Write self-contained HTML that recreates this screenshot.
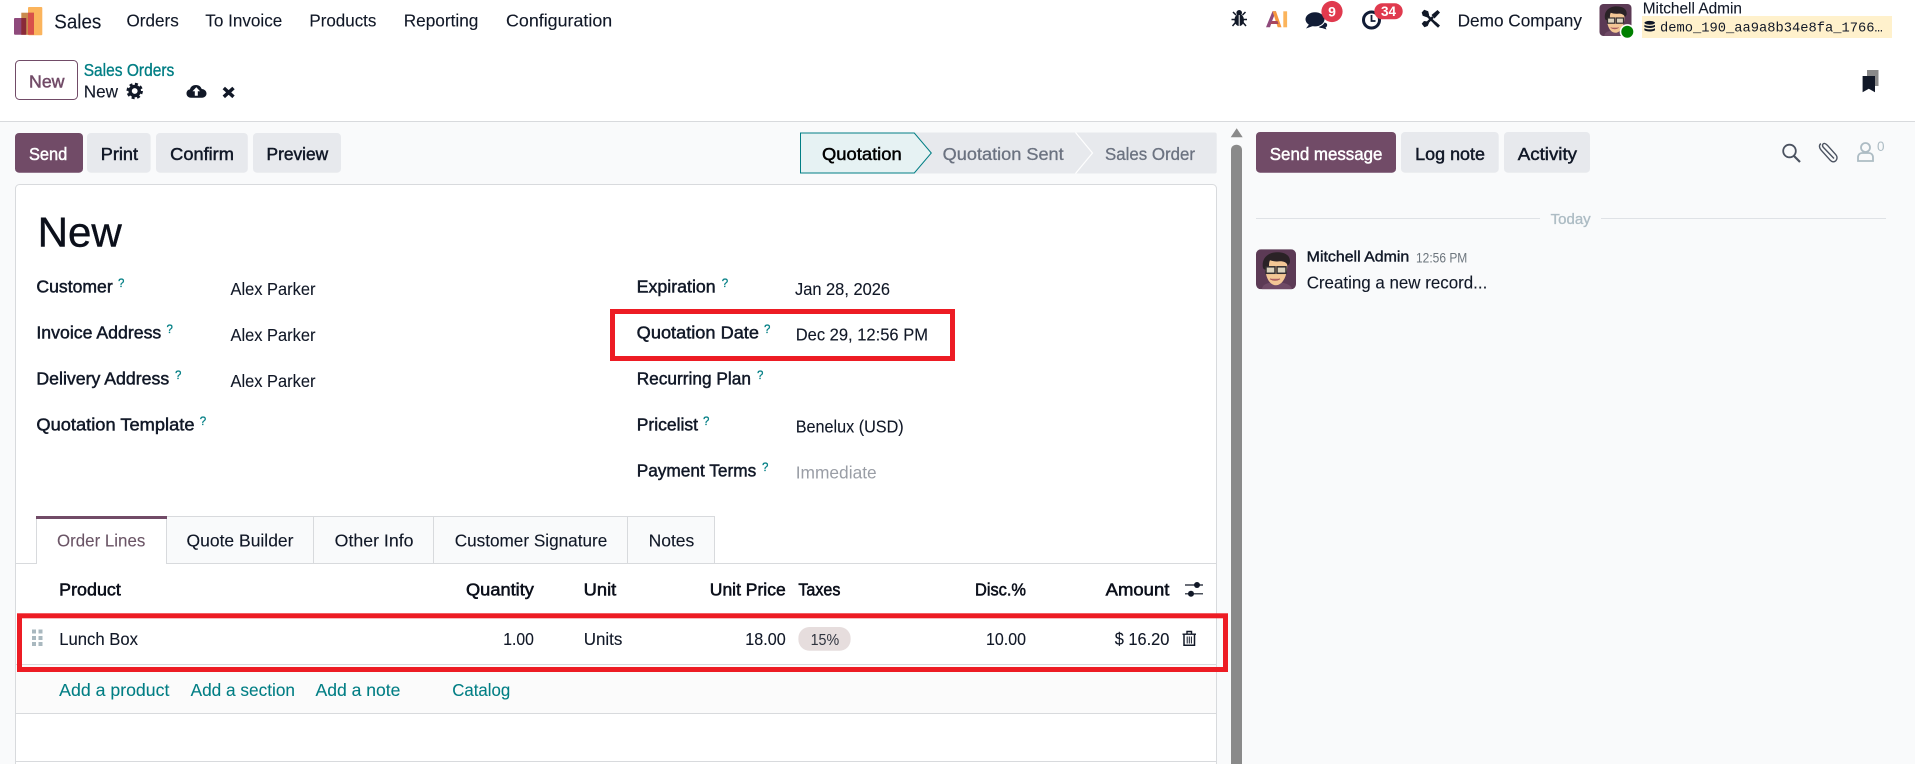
<!DOCTYPE html>
<html lang="en">
<head>
<meta charset="utf-8">
<title>Sales Orders - New</title>
<style>
html,body{margin:0;padding:0;width:1915px;height:764px;overflow:hidden;background:#fff}
svg{display:block;position:absolute;left:0;top:0}
text{font-family:"Liberation Sans",Arial,sans-serif;font-size:17.6px;fill:#111827;white-space:pre}
text:not([style]):not([class]){stroke:#111827;stroke-width:.12px}
.m{stroke:currentColor;stroke-width:.48px}
.b{color:#111827}
.q{font-size:11.5px;fill:#017e84;color:#017e84;stroke:#017e84;stroke-width:.25px}
.l{fill:#017e84;stroke:#017e84;stroke-width:.1px}
.g{fill:#6b7280;color:#6b7280}
</style>
</head>
<body>
<svg width="1915" height="764" viewBox="0 0 1915 764" xmlns="http://www.w3.org/2000/svg">
<defs>
<symbol id="ava" viewBox="0 0 40 40">
<rect width="40" height="40" rx="5" fill="#5c3a55"/>
<path d="M6 40c0-5 6-7 14-7s15 2 16 7z" fill="#6f4a66"/>
<path d="M9 16c0-8 7-10 13-9 7 1 10 5 9 13-1 10-6 16-11 16-7 0-11-9-11-20z" fill="#f3c795"/>
<path d="M7 19C5 9 12 3 21 3c8 0 13 3 13 9 0 2-1 3-2 4-2-3-4-4-8-4-4 .5-7 0-10-1-1 2-1 4-1 6l-2 4c-2-.5-3-1-4-2z" fill="#2a2226"/>
<rect x="10" y="17.500" width="9" height="6.500" fill="#dcd3bd" stroke="#332e30" stroke-width="1.500"/>
<rect x="21" y="17.500" width="9" height="6.500" fill="#dcd3bd" stroke="#332e30" stroke-width="1.500"/>
<path d="M14 29.500c3 2 7 2 10 0" fill="#b56b6f" stroke="#a85a5a" stroke-width="1"/>
</symbol>
</defs>

<!-- page backgrounds -->
<rect x="0" y="0" width="1915" height="764" fill="#f9fafb"/>
<rect x="0" y="0" width="1915" height="121" fill="#fff"/>
<rect x="0" y="121" width="1915" height="1" fill="#d8dadd"/>

<!-- logo -->
<rect x="28" y="7" width="14.300" height="28.300" rx="1" fill="#fbb45c"/>
<rect x="21.300" y="12.700" width="12.700" height="22" fill="#c98a4e"/>
<rect x="28" y="12.700" width="6" height="22" fill="#d8504a"/>
<rect x="14" y="18" width="12.300" height="16.700" rx="1" fill="#8f4a7c"/>
<rect x="21.300" y="18" width="5" height="16.700" fill="#8a2a38"/>
<rect x="26.300" y="18" width="1.700" height="16.700" fill="#c98a4e"/>

<!-- top nav -->
<text x="54.300" y="28.300" style="font-size:20.500px;stroke:#111827;stroke-width:.12px" textLength="47" lengthAdjust="spacingAndGlyphs">Sales</text>
<text x="126.500" y="26.700" textLength="52.300" lengthAdjust="spacingAndGlyphs">Orders</text>
<text x="205.300" y="26.700" textLength="77" lengthAdjust="spacingAndGlyphs">To Invoice</text>
<text x="309.400" y="26.700" textLength="67" lengthAdjust="spacingAndGlyphs">Products</text>
<text x="403.700" y="26.700" textLength="74.700" lengthAdjust="spacingAndGlyphs">Reporting</text>
<text x="506" y="26.700" textLength="106.200" lengthAdjust="spacingAndGlyphs">Configuration</text>

<!-- systray: bug -->
<g fill="#111827" stroke="#111827">
<ellipse cx="1239.200" cy="20" rx="4.800" ry="6" stroke="none"/>
<circle cx="1239.200" cy="12.800" r="2.800" stroke="none"/>
<path d="M1233 12l3 3M1245.500 12l-3 3M1231.500 19.500h4M1247 19.500h-4M1232.500 26l3-3.500M1246 26l-3-3.500" stroke-width="1.500" fill="none"/>
</g>
<rect x="1238.700" y="15" width="1" height="11" fill="#fff"/>
<!-- AI -->
<path d="M1266 27.300l6.500-16h3.500l-4 10-2 6z" fill="#8f4a7c"/>
<path d="M1272.500 11.300h3.500l5.500 16h-3.800z" fill="#f5973f"/>
<path d="M1269.500 24l2.500-3h5.500l1 3z" fill="#a9475e"/>
<rect x="1283.300" y="11.300" width="3.800" height="16" fill="#fbb45c"/>
<!-- chat -->
<path d="M1320 22c2-.5 6 .5 7 2 .5 2-.5 3-1.500 3.500l1 2-4.500-1.500c-2 0-4-1-4-2.500z" fill="#111c36"/>
<ellipse cx="1315" cy="19.300" rx="10" ry="7.600" fill="#111c36" stroke="#fff" stroke-width="1"/>
<path d="M1309 24.500l-3 4 7-2.500z" fill="#111c36"/>
<!-- chat badge -->
<circle cx="1332" cy="11.500" r="10.600" fill="#e03a4e"/>
<text x="1332" y="16.300" text-anchor="middle" style="font-size:14px;fill:#fff;font-weight:700">9</text>
<!-- clock -->
<circle cx="1371.500" cy="20" r="8" fill="none" stroke="#111c36" stroke-width="3"/>
<path d="M1371.500 15v6h4" fill="none" stroke="#111c36" stroke-width="1.800"/>
<!-- clock badge -->
<rect x="1374.300" y="3.300" width="28.400" height="16" rx="8" fill="#e03a4e"/>
<text x="1388.500" y="16" text-anchor="middle" style="font-size:13.500px;fill:#fff;font-weight:700">34</text>
<!-- tools -->
<path d="M1424.500 13l13 12.500" stroke="#111827" stroke-width="2.600" fill="none"/>
<path d="M1421.700 12.500l2.500-2.700 4 1.500 1 4-2.500 2-4-1.500z" fill="#111827"/>
<path d="M1433.500 23.500l2-2 4.500 4-2 2.300z" fill="#111827"/>
<path d="M1425 25l8-8" stroke="#111827" stroke-width="2.400" fill="none"/>
<path d="M1431.500 15l6-5 2.500 2.500-5.500 6z" fill="#111827"/>
<path d="M1428 21.500l-4 -0.500-2.300 2.800 2.700 3.500 3.300-1.300 1.300-3z" fill="#111827"/>
<text x="1457.600" y="26.700" textLength="124.400" lengthAdjust="spacingAndGlyphs">Demo Company</text>

<!-- user -->
<use href="#ava" x="1599.300" y="4" width="32.400" height="32"/>
<circle cx="1627.300" cy="31.700" r="7.600" fill="#fff"/>
<circle cx="1627.300" cy="31.700" r="6" fill="#008000"/>
<text x="1642.700" y="13.500" style="font-size:15.500px;stroke:#111827;stroke-width:.1px" textLength="99.300" lengthAdjust="spacingAndGlyphs">Mitchell Admin</text>
<rect x="1642" y="16" width="250" height="22" fill="#fff1cc"/>
<g fill="#111827">
<ellipse cx="1649.700" cy="22.800" rx="5.300" ry="1.900"/>
<path d="M1644.400 24.700c2 1.600 8.600 1.600 10.600 0v2.100c-2 1.600-8.600 1.600-10.600 0z"/>
<path d="M1644.400 28.200c2 1.600 8.600 1.600 10.600 0v2.100c-2 1.600-8.600 1.600-10.600 0z"/>
</g>
<text x="1660" y="31.700" style="font-family:'Liberation Mono',monospace;font-size:13.750px" textLength="222.700" lengthAdjust="spacingAndGlyphs">demo_190_aa9a8b34e8fa_1766…</text>

<!-- control panel -->
<rect x="15.500" y="60.500" width="62" height="39" rx="4" fill="#fff" stroke="#714b67"/>
<text class="m" x="29" y="87.300" style="fill:#714b67;color:#714b67" textLength="35.500" lengthAdjust="spacingAndGlyphs">New</text>
<text x="83.700" y="76" class="m" style="fill:#017e84;color:#017e84;stroke-width:.35px" textLength="90.600" lengthAdjust="spacingAndGlyphs">Sales Orders</text>
<text x="83.700" y="97.300" textLength="34.300" lengthAdjust="spacingAndGlyphs">New</text>
<!-- gear -->
<circle cx="134.700" cy="91" r="4.600" fill="none" stroke="#111827" stroke-width="3.400"/>
<circle cx="134.700" cy="91" r="7" fill="none" stroke="#111827" stroke-width="2.400" stroke-dasharray="3 2.500"/>
<!-- cloud -->
<path d="M191 97.700c-3 0-4.500-2-4.500-4.300 0-2.200 1.500-3.800 3.500-4 .5-2.800 3-4.400 6-4.400 3 0 5 1.800 5.700 4 2.700.2 4.800 2 4.800 4.500 0 2.500-2 4.200-4.500 4.200z" fill="#111827"/>
<path d="M196.300 87.300l-3.800 4h2.300v4.400h3v-4.400h2.300z" fill="#fff"/>
<!-- x -->
<path d="M223.800 88l9.700 8.800M233.500 88l-9.700 8.800" stroke="#111827" stroke-width="3.500" fill="none"/>
<!-- bookmarks -->
<path d="M1867 70h11.500v16h-11.500z" fill="#8a8a8a"/>
<path d="M1862.600 76h12.400v16.300l-6.200-3.500-6.200 3.500z" fill="#111827"/>

<!-- action buttons -->
<rect x="15" y="133" width="68" height="39.700" rx="4" fill="#714b67"/>
<text class="m" x="29" y="160" style="fill:#fff;color:#fff" textLength="38.300" lengthAdjust="spacingAndGlyphs">Send</text>
<rect x="87" y="133" width="63.600" height="39.700" rx="4" fill="#e7e9ed"/>
<text class="m b" x="100.800" y="160" textLength="37.200" lengthAdjust="spacingAndGlyphs">Print</text>
<rect x="156" y="133" width="91.800" height="39.700" rx="4" fill="#e7e9ed"/>
<text class="m b" x="170.200" y="160" textLength="63.700" lengthAdjust="spacingAndGlyphs">Confirm</text>
<rect x="253" y="133" width="88" height="39.700" rx="4" fill="#e7e9ed"/>
<text class="m b" x="266.500" y="160" textLength="61.700" lengthAdjust="spacingAndGlyphs">Preview</text>

<!-- status bar -->
<rect x="800" y="132.500" width="416.700" height="41" rx="2" fill="#e7e9ed"/>
<path d="M1075.500 132.500l17 20.500-17 20.500" fill="none" stroke="#fff" stroke-width="1.200"/>
<path d="M800.500 133h113.800l17 20-17 20H800.500z" fill="#e6f2f3" stroke="#017e84" stroke-width="1"/>
<text class="m" x="822" y="160" style="fill:#000;color:#000" textLength="79.700" lengthAdjust="spacingAndGlyphs">Quotation</text>
<text class="m g" x="942.700" y="160" style="stroke-width:.3px" textLength="121" lengthAdjust="spacingAndGlyphs">Quotation Sent</text>
<text class="m g" x="1105" y="160" style="stroke-width:.3px" textLength="90" lengthAdjust="spacingAndGlyphs">Sales Order</text>

<!-- sheet -->
<rect x="15.500" y="184.500" width="1201" height="600" rx="4" fill="#fff" stroke="#d8dadd"/>

<text x="37.600" y="246.700" style="font-size:42px;fill:#0b0f1a;stroke:#0b0f1a;stroke-width:.4px" textLength="84.200" lengthAdjust="spacingAndGlyphs">New</text>

<!-- left fields -->
<text class="m b" x="36.400" y="292.700" textLength="76.300" lengthAdjust="spacingAndGlyphs">Customer</text>
<text class="q" x="118" y="287">?</text>
<text x="230.500" y="295" textLength="85" lengthAdjust="spacingAndGlyphs">Alex Parker</text>
<text class="m b" x="36.400" y="338.700" textLength="124.900" lengthAdjust="spacingAndGlyphs">Invoice Address</text>
<text class="q" x="166.500" y="333">?</text>
<text x="230.500" y="341" textLength="85" lengthAdjust="spacingAndGlyphs">Alex Parker</text>
<text class="m b" x="36.400" y="384.700" textLength="132.800" lengthAdjust="spacingAndGlyphs">Delivery Address</text>
<text class="q" x="175" y="379">?</text>
<text x="230.500" y="387" textLength="85" lengthAdjust="spacingAndGlyphs">Alex Parker</text>
<text class="m b" x="36.400" y="430.700" textLength="158.100" lengthAdjust="spacingAndGlyphs">Quotation Template</text>
<text class="q" x="199.700" y="425">?</text>

<!-- right fields -->
<text class="m b" x="636.700" y="292.700" textLength="79" lengthAdjust="spacingAndGlyphs">Expiration</text>
<text class="q" x="721.700" y="287">?</text>
<text x="795" y="295" textLength="95" lengthAdjust="spacingAndGlyphs">Jan 28, 2026</text>
<text class="m b" x="636.700" y="338.500" textLength="122.300" lengthAdjust="spacingAndGlyphs">Quotation Date</text>
<text class="q" x="764" y="333">?</text>
<text x="795.700" y="340.700" textLength="132.300" lengthAdjust="spacingAndGlyphs">Dec 29, 12:56 PM</text>
<text class="m b" x="636.700" y="384.700" textLength="114.300" lengthAdjust="spacingAndGlyphs">Recurring Plan</text>
<text class="q" x="757" y="379">?</text>
<text class="m b" x="636.700" y="430.700" textLength="61.300" lengthAdjust="spacingAndGlyphs">Pricelist</text>
<text class="q" x="703" y="425">?</text>
<text x="795.700" y="432.700" textLength="108" lengthAdjust="spacingAndGlyphs">Benelux (USD)</text>
<text class="m b" x="636.700" y="476.700" textLength="119.600" lengthAdjust="spacingAndGlyphs">Payment Terms</text>
<text class="q" x="762" y="471">?</text>
<text x="795.700" y="478.700" style="fill:#9a9ea6" textLength="81" lengthAdjust="spacingAndGlyphs">Immediate</text>

<!-- tabs -->
<rect x="16" y="563" width="1200" height="1" fill="#d8dadd"/>
<rect x="166.500" y="516.500" width="548" height="47" fill="#f9fafb" stroke="#d8dadd"/>
<rect x="313" y="516.500" width="1" height="47" fill="#d8dadd"/>
<rect x="433" y="516.500" width="1" height="47" fill="#d8dadd"/>
<rect x="627" y="516.500" width="1" height="47" fill="#d8dadd"/>
<rect x="36" y="516" width="131" height="48.500" fill="#fff"/>
<rect x="36" y="517" width="1" height="47" fill="#d8dadd"/>
<rect x="166" y="517" width="1" height="47" fill="#d8dadd"/>
<rect x="36" y="516" width="131" height="3" fill="#714b67"/>
<text x="57" y="546.700" style="fill:#6b5566;stroke:#6b5566;stroke-width:.1px" textLength="88.300" lengthAdjust="spacingAndGlyphs">Order Lines</text>
<text x="186.500" y="546.700" textLength="107" lengthAdjust="spacingAndGlyphs">Quote Builder</text>
<text x="334.700" y="546.700" textLength="78.800" lengthAdjust="spacingAndGlyphs">Other Info</text>
<text x="454.700" y="546.700" textLength="152.600" lengthAdjust="spacingAndGlyphs">Customer Signature</text>
<text x="648.600" y="546.700" textLength="45.700" lengthAdjust="spacingAndGlyphs">Notes</text>

<!-- table header -->
<g>
<text class="m" x="59.200" y="595.700" style="fill:#0b0f1a;color:#0b0f1a;stroke-width:.55px" textLength="61.600" lengthAdjust="spacingAndGlyphs">Product</text>
<text class="m" x="466" y="595.700" style="fill:#0b0f1a;color:#0b0f1a;stroke-width:.55px" textLength="67.900" lengthAdjust="spacingAndGlyphs">Quantity</text>
<text class="m" x="583.700" y="595.700" style="fill:#0b0f1a;color:#0b0f1a;stroke-width:.55px" textLength="32.600" lengthAdjust="spacingAndGlyphs">Unit</text>
<text class="m" x="709.800" y="595.700" style="fill:#0b0f1a;color:#0b0f1a;stroke-width:.55px" textLength="75.900" lengthAdjust="spacingAndGlyphs">Unit Price</text>
<text class="m" x="798.400" y="595.700" style="fill:#0b0f1a;color:#0b0f1a;stroke-width:.55px" textLength="42" lengthAdjust="spacingAndGlyphs">Taxes</text>
<text class="m" x="975" y="595.700" style="fill:#0b0f1a;color:#0b0f1a;stroke-width:.55px" textLength="51" lengthAdjust="spacingAndGlyphs">Disc.%</text>
<text class="m" x="1105.700" y="595.700" style="fill:#0b0f1a;color:#0b0f1a;stroke-width:.55px" textLength="63.700" lengthAdjust="spacingAndGlyphs">Amount</text>
</g>
<!-- sliders -->
<path d="M1185 585h18M1185 593.800h18" stroke="#111827" stroke-width="1.200"/>
<circle cx="1197" cy="585" r="3" fill="#111827"/>
<circle cx="1191" cy="593.800" r="3" fill="#111827"/>

<!-- row -->
<rect x="16" y="664" width="1200" height="49.300" fill="#fbfbfb"/>
<rect x="16" y="664" width="1200" height="1" fill="#d8dadd"/>
<rect x="16" y="713" width="1200" height="1" fill="#d8dadd"/>
<rect x="16" y="761" width="1200" height="1" fill="#d8dadd"/>
<g fill="#a9b8bf">
<rect x="32" y="629.500" width="4" height="4"/><rect x="38.500" y="629.500" width="4" height="4"/>
<rect x="32" y="636" width="4" height="4"/><rect x="38.500" y="636" width="4" height="4"/>
<rect x="32" y="642" width="4" height="4"/><rect x="38.500" y="642" width="4" height="4"/>
</g>
<text x="59.200" y="645" textLength="78.800" lengthAdjust="spacingAndGlyphs">Lunch Box</text>
<text x="503.300" y="645" textLength="30.600" lengthAdjust="spacingAndGlyphs">1.00</text>
<text x="583.700" y="645" textLength="38.700" lengthAdjust="spacingAndGlyphs">Units</text>
<text x="745.300" y="645" textLength="40.400" lengthAdjust="spacingAndGlyphs">18.00</text>
<rect x="798.400" y="627" width="52.200" height="23.700" rx="11" fill="#e6dddd"/>
<text x="810.600" y="645" style="font-size:15.500px;fill:#2f333e" textLength="28.600" lengthAdjust="spacingAndGlyphs">15%</text>
<text x="986" y="645" textLength="40" lengthAdjust="spacingAndGlyphs">10.00</text>
<text x="1114.700" y="645" textLength="54.700" lengthAdjust="spacingAndGlyphs">$ 16.20</text>
<!-- trash -->
<path d="M1182.500 634.200h13.500M1187 634v-2.500h4.500v2.500" fill="none" stroke="#111827" stroke-width="1.400"/>
<path d="M1184 634.500v10.800h10.500v-10.800" fill="none" stroke="#111827" stroke-width="1.500"/>
<path d="M1187.200 636.500v7M1189.300 636.500v7M1191.400 636.500v7" stroke="#111827" stroke-width="1"/>

<text x="59.200" y="696" class="l" textLength="110.200" lengthAdjust="spacingAndGlyphs">Add a product</text>
<text x="190.600" y="696" class="l" textLength="104.400" lengthAdjust="spacingAndGlyphs">Add a section</text>
<text x="315.500" y="696" class="l" textLength="84.900" lengthAdjust="spacingAndGlyphs">Add a note</text>
<text x="452.200" y="696" class="l" textLength="58" lengthAdjust="spacingAndGlyphs">Catalog</text>

<!-- red highlight boxes -->
<rect x="612.500" y="311.500" width="340" height="47" fill="none" stroke="#ed1c24" stroke-width="5"/>
<rect x="19.500" y="615.800" width="1206" height="53.700" fill="none" stroke="#ed1c24" stroke-width="5"/>

<!-- scrollbar -->
<path d="M1230.700 137.300h12l-6-9z" fill="#8a8a8a"/>
<path d="M1231 764V150c0-7 11-7 11 0v614z" fill="#8a8a8a"/>

<!-- chatter -->
<rect x="1256" y="132" width="140" height="40.700" rx="4" fill="#714b67"/>
<text class="m" x="1269.800" y="160" style="fill:#fff;color:#fff" textLength="112.600" lengthAdjust="spacingAndGlyphs">Send message</text>
<rect x="1401" y="132" width="97.700" height="40.700" rx="4" fill="#e7e9ed"/>
<text class="m b" x="1415.200" y="160" textLength="69.800" lengthAdjust="spacingAndGlyphs">Log note</text>
<rect x="1504" y="132" width="86" height="40.700" rx="4" fill="#e7e9ed"/>
<text class="m b" x="1517.800" y="160" textLength="59.200" lengthAdjust="spacingAndGlyphs">Activity</text>

<!-- search -->
<circle cx="1789.500" cy="151" r="6.300" fill="none" stroke="#4b5260" stroke-width="1.800"/>
<path d="M1794 156l6 6" stroke="#4b5260" stroke-width="2.200"/>
<!-- paperclip -->
<path d="M1834 158.500l-10.500-11c-2-2.200-.5-4.500 1.300-4 1 .2 1.500.7 2.500 1.700l8.500 9.500c1.800 2 1.500 4.500 0 6-1.800 1.700-4 1.300-5.600-.5l-9-10c-2.500-3-2-5.500-.3-6.600" fill="none" stroke="#4b5260" stroke-width="1.400"/>
<!-- followers -->
<circle cx="1865.500" cy="147.500" r="4.500" fill="none" stroke="#adbcc4" stroke-width="1.800"/>
<path d="M1858 161v-3.500c0-3 2-4.500 4-4.500h7c2 0 4 1.500 4 4.500v3.500z" fill="none" stroke="#adbcc4" stroke-width="1.800"/>
<text x="1877" y="151" style="font-size:13.500px;fill:#adbcc4">0</text>

<!-- today -->
<rect x="1256" y="218" width="284" height="1" fill="#dfe2e6"/>
<rect x="1601" y="218" width="285" height="1" fill="#dfe2e6"/>
<text class="m" x="1550.700" y="224" style="font-size:14.800px;fill:#adbcc4;color:#adbcc4;stroke-width:.35px" textLength="40" lengthAdjust="spacingAndGlyphs">Today</text>

<!-- message -->
<use href="#ava" x="1256" y="249.300" width="40" height="40"/>
<text class="m b" x="1306.700" y="261.700" style="font-size:15px;stroke-width:.4px" textLength="102.600" lengthAdjust="spacingAndGlyphs">Mitchell Admin</text>
<text x="1416" y="262.300" style="font-size:13.500px;fill:#6c757d" textLength="51.300" lengthAdjust="spacingAndGlyphs">12:56 PM</text>
<text x="1306.700" y="288.300" textLength="180.600" lengthAdjust="spacingAndGlyphs">Creating a new record...</text>
</svg>
</body>
</html>
